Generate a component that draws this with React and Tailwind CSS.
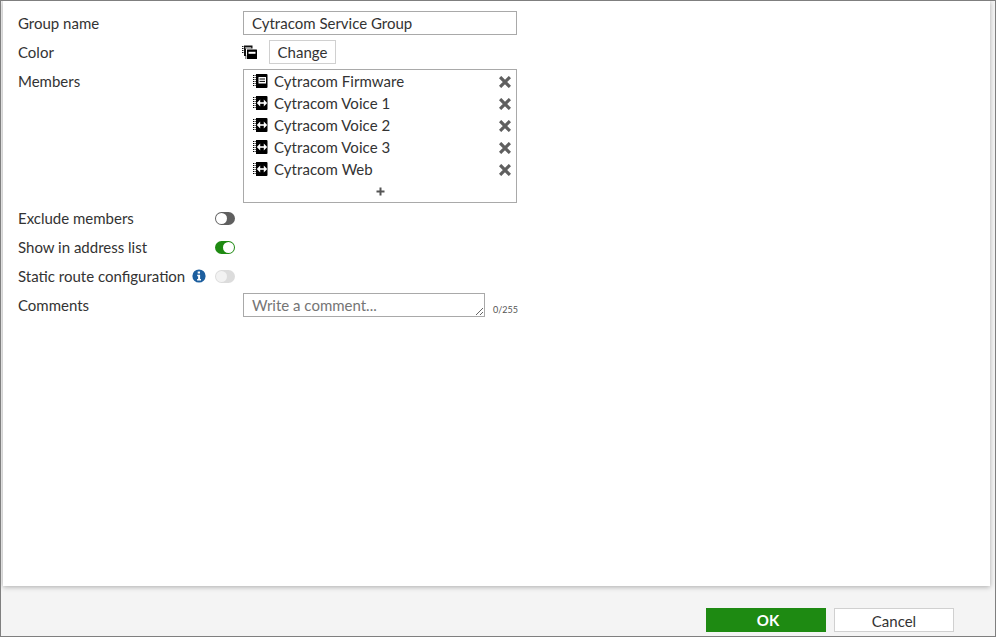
const font = { fontFamily: 'Lato, "Noto Sans", sans-serif' };

// spiral binding dots down the left edge of the notebook icons
const Binding = () => (
  <path d="M0 2.5h3M0 4.5h3M0 6.5h3M0 8.5h3M0 10.5h3M0 12.5h3" stroke="#000" strokeWidth="1" strokeDasharray="1 0.6" />
);

const AddressIcon = () => (
  <svg width="15" height="16" viewBox="0 0 15 16" className="shrink-0">
    <path d="M3 1h10.5a1 1 0 0 1 1 1v12a1 1 0 0 1-1 1H3z" fill="#000" />
    <Binding />
    <path d="M5.5 4h7.5v6.5H5.5z" fill="#fff" />
    <path d="M6.5 6h5.5M6.5 8.4h5.5" stroke="#000" strokeWidth="1" />
  </svg>
);

const ServiceIcon = () => (
  <svg width="15" height="16" viewBox="0 0 15 16" className="shrink-0">
    <path d="M3 1h10.5a1 1 0 0 1 1 1v12a1 1 0 0 1-1 1H3z" fill="#000" />
    <Binding />
    <path d="M6 8h6" stroke="#fff" strokeWidth="1.6" />
    <path d="M7.2 4.6 3.8 8l3.4 3.4zM10.8 4.6 14.2 8l-3.4 3.4z" fill="#fff" />
  </svg>
);

const ColorIcon = () => (
  <svg width="15" height="15" viewBox="0 0 15 15">
    <path d="M2 .5h8.5v3H4v7.5H2z" fill="#111" />
    <path d="M3.2 2.4h6v1H3.2z" fill="#fff" />
    <path d="M5 4.5h9.5a.5.5 0 0 1 .5.5v8.5a.5.5 0 0 1-.5.5H5z" fill="#000" />
    <path d="M6.5 6.8h7v2h-7z" fill="#fff" />
    <path d="M0 1.5h1.5M0 3.5h1.5M0 5.5h1.5M0 7.5h1.5M3 11h1.5M3 13h1.5" stroke="#000" strokeWidth="0.9" />
  </svg>
);

const RemoveIcon = () => (
  <svg width="12" height="12" viewBox="0 0 12 12" className="mt-0.5 shrink-0">
    <path d="M2.2 2.2l7.6 7.6M9.8 2.2l-7.6 7.6" stroke="#5f5f5f" strokeWidth="3.2" strokeLinecap="square" />
  </svg>
);

const InfoIcon = () => (
  <svg width="14" height="14" viewBox="0 0 14 14" className="shrink-0">
    <circle cx="7" cy="7" r="6.6" fill="#1d5f9f" />
    <path d="M5.7 2.6h2.3v2H5.7zM5.2 5.7h2.9v4.2h.9v1.5H5.1V9.9h1V7.2h-.9z" fill="#fff" />
  </svg>
);

const Toggle = ({ on, disabled }) => {
  const track = disabled ? 'bg-[#dcdcdc]' : on ? 'bg-[#1e8a12]' : 'bg-[#5f5f5f]';
  return (
    <div className={`flex h-[13px] w-5 rounded-full p-px ${track} ${on ? 'justify-end' : 'justify-start'}`}>
      <div className={`h-[11px] w-[11px] rounded-full ${disabled ? 'bg-[#f2f2f2]' : 'bg-white'}`} />
    </div>
  );
};

const Row = ({ label, info, children, className = '' }) => (
  <div className={`flex min-h-6 items-start ${className}`}>
    <div className="flex h-6 w-[197px] shrink-0 items-center gap-[7px]">
      <span>{label}</span>
      {info && <InfoIcon />}
    </div>
    {children}
  </div>
);

const ToggleRow = ({ label, info, on, disabled }) => (
  <Row label={label} info={info}>
    <div className="flex h-6 w-5 items-center"><Toggle on={on} disabled={disabled} /></div>
  </Row>
);

const members = [
  { name: 'Cytracom Firmware', icon: <AddressIcon /> },
  { name: 'Cytracom Voice 1', icon: <ServiceIcon /> },
  { name: 'Cytracom Voice 2', icon: <ServiceIcon /> },
  { name: 'Cytracom Voice 3', icon: <ServiceIcon /> },
  { name: 'Cytracom Web', icon: <ServiceIcon /> },
];

export default function App() {
  return (
    <div style={font} className="flex h-[637px] w-[996px] flex-col overflow-hidden border border-[#7f7f7f] bg-[#f4f4f4] text-[15px] text-[#333]">
      <div className="h-[585px] ml-0.5 mr-[5px] shrink-0 bg-white pl-[15px] pt-2.5 shadow-[0_1px_5px_rgba(0,0,0,0.3)]">
        <div className="flex flex-col gap-[5px]">
          <div className="flex items-start">
            <div className="flex h-6 w-[225px] shrink-0 items-center">Group name</div>
            <div className="flex h-6 w-[274px] items-center border border-[#a9a9a9] px-2">Cytracom Service Group</div>
          </div>
          <div className="flex items-start">
            <div className="flex h-6 w-[225px] shrink-0 items-center">Color</div>
            <div className="-ml-px flex h-6 w-[26px] shrink-0 items-center"><ColorIcon /></div>
            <div className="ml-px flex h-6 w-[67px] items-center justify-center border border-[#d0d0d0]">Change</div>
          </div>
          <div className="mb-[-2px] flex items-start">
            <div className="flex h-6 w-[225px] shrink-0 items-center">Members</div>
            <div className="flex h-[134px] w-[274px] flex-col border border-[#a9a9a9]">
              {members.map((m) => (
                <div key={m.name} className="flex h-[22px] items-center pl-[9px] pr-[5px]">
                  <span className="flex w-[21px]">{m.icon}</span>
                  <span className="flex-1 tracking-[0.05px]">{m.name}</span>
                  <RemoveIcon />
                </div>
              ))}
              <div className="flex h-[22px] items-center justify-center pt-px text-[#5f5f5f]">
                <svg width="9" height="9" viewBox="0 0 9 9"><path d="M4.5 .5v8M.5 4.5h8" stroke="#555" strokeWidth="2" /></svg>
              </div>
            </div>
          </div>
          <ToggleRow label="Exclude members" />
          <ToggleRow label="Show in address list" on />
          <ToggleRow label="Static route configuration" info disabled />
          <div className="flex items-start">
            <div className="flex h-6 w-[225px] shrink-0 items-center">Comments</div>
            <textarea
              readOnly
              placeholder="Write a comment..."
              className="h-6 w-[242px] border border-[#a9a9a9] px-2 py-0 leading-[22px] placeholder:text-[#757575]"
            />
            <span className="ml-2 mt-[11px] text-[9px] leading-3 text-[#555]">0/255</span>
          </div>
        </div>
      </div>
      <div className="flex flex-1 items-start justify-end gap-2 pr-[41px] pt-[22px]">
        <div className="flex h-6 w-[120px] items-center justify-center bg-[#1e8a12] pl-1 pt-px font-bold text-white">OK</div>
        <div className="flex h-6 w-[120px] items-center justify-center border border-[#d0d0d0] bg-white pt-0.5">Cancel</div>
      </div>
    </div>
  );
}
